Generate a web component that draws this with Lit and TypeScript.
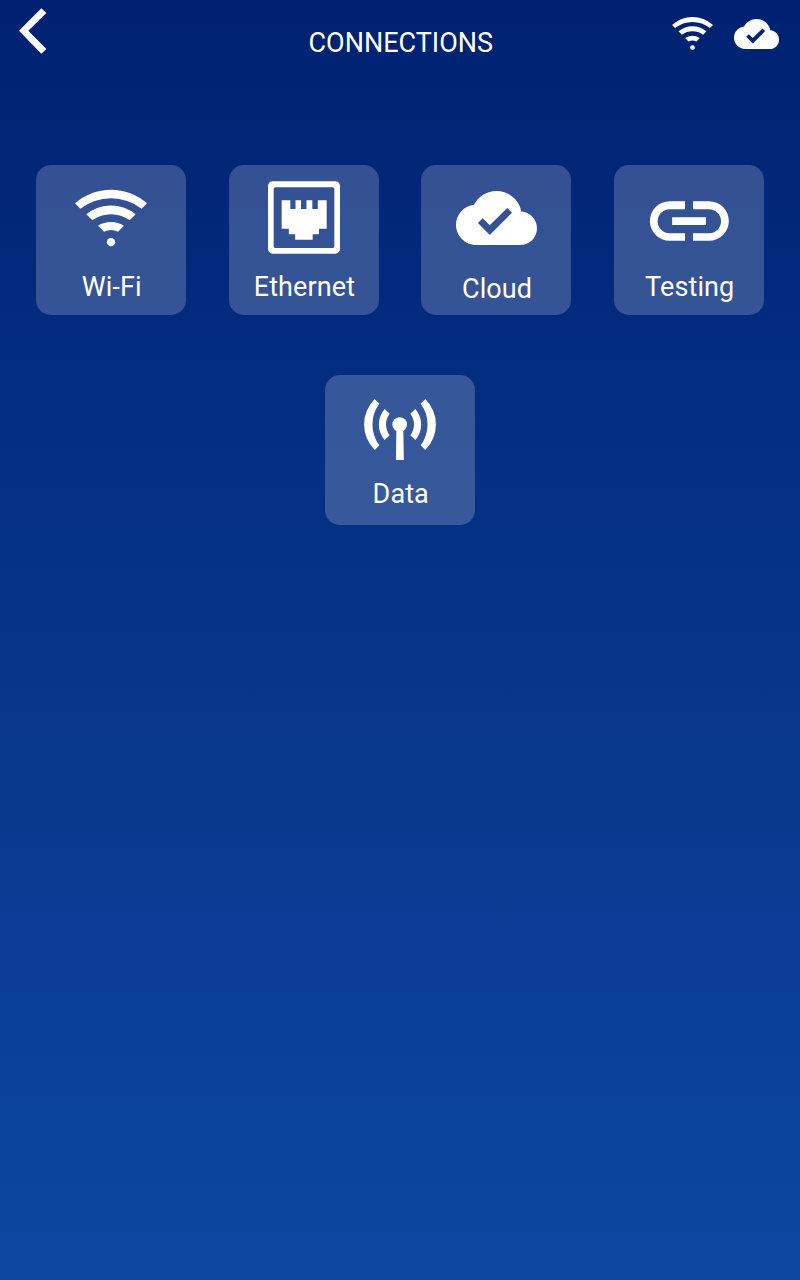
import { LitElement, html, css, svg } from "lit";
import { customElement, property } from "lit/decorators.js";

const wifi = svg`
  <path d="M135 130A163 163 0 0 1 351 130L335 146A152 152 0 0 0 151 146Z"/>
  <path d="M169 163A115.5 115.5 0 0 1 317 163L299 181A96 96 0 0 0 187 181Z"/>
  <path d="M204 197A74.6 74.6 0 0 1 282 197L264 215A47 47 0 0 0 222 215Z"/>
  <circle cx="243" cy="246.5" r="12.5"/>`;

const cloud = svg`
  <path d="M19.35 10.04C18.67 6.59 15.64 4 12 4 9.11 4 6.6 5.64 5.35 8.04 2.34 8.36 0 10.91 0 14c0 3.31 2.69 6 6 6h13c2.76 0 5-2.24 5-5 0-2.64-2.05-4.78-4.65-4.96zM10 17l-3.5-3.5 1.41-1.41L10 14.17 15.18 9l1.41 1.41L10 17z"/>`;

const ethernet = svg`
  <path fill-rule="evenodd" d="M146 63.5H334A14 14 0 0 1 348 77V267A14 14 0 0 1 334 281H146A14 14 0 0 1 132 267V77A14 14 0 0 1 146 63.5ZM154 81.5A5 5 0 0 0 149 86V259A5 5 0 0 0 154 264H326A5 5 0 0 0 331 259V86A5 5 0 0 0 326 81.5Z"/>
  <path d="M173 121H199V147H214.500V121H231V147H247.500V121H265V147H281.500V121H308V206H285V223H266V239.500H213.500V223H194.500V206H173Z"/>`;

const link = svg`
  <path d="M228 123.500H182A59.500 59.500 0 0 0 182 242.500H228V219.500H182A36 36 0 0 1 182 147.500H228ZM252 123.500H300A59.500 59.500 0 0 1 300 242.500H252V219.500H300A36 36 0 0 0 300 147.500H252ZM189.500 171.500H291V195H189.500Z"/>`;

const wave = svg`
  <path d="M164 87A108 108 0 0 0 164 240L178 226A105 105 0 0 1 178 101Z"/>
  <path d="M194 117A71 71 0 0 0 194 210L209 196A53.500 53.500 0 0 1 209 131Z"/>`;

const antenna = svg`
  ${wave}<g transform="matrix(-1 0 0 1 480 0)">${wave}</g>
  <circle cx="239" cy="163.500" r="22"/>
  <path d="M229 180H250L251.500 270H228Z"/>`;

@customElement("menu-tile")
class MenuTile extends LitElement {
  @property() label = "";
  static styles = css`
    :host {
      box-sizing: border-box;
      width: 150px;
      height: 150px;
      border-radius: 15px;
      background: rgba(255, 255, 255, 0.2);
      display: flex;
      flex-direction: column;
      align-items: center;
      justify-content: space-between;
    }
    .label {
      padding-left: 1.5px;
      line-height: 34px;
      white-space: nowrap;
    }
  `;
  render() {
    return html`<slot></slot><span class="label">${this.label}</span>`;
  }
}

@customElement("app-root")
class AppRoot extends LitElement {
  static styles = css`
    :host {
      display: block;
      box-sizing: border-box;
      min-height: 1280px;
      background: linear-gradient(#002171, #0d47a1);
      color: #fff;
      font: 27px Roboto, sans-serif;
    }
    svg {
      display: block;
      fill: #fff;
    }
    header {
      display: grid;
      grid-template-columns: 1fr auto 1fr;
      align-items: start;
      height: 165px;
    }
    .back {
      margin: 8px 0 0 19px;
    }
    h1 {
      margin: 26px 0 0;
      padding-left: 1.5px;
      font-size: 27px;
      font-weight: 400;
      line-height: 34px;
    }
    .status {
      display: flex;
      justify-content: flex-end;
      gap: 21px;
      padding: 17px 21px 0 0;
    }
    .status .cloud {
      margin-top: 2px;
    }
    .row {
      display: flex;
      justify-content: space-between;
      padding: 0 36px 60px;
      letter-spacing: 0.1px;
    }
    .centered {
      justify-content: center;
    }
    menu-tile {
      padding-bottom: 11px;
    }
    .low {
      padding-bottom: 9px;
    }
    .high {
      padding-bottom: 14px;
    }
  `;

  render() {
    return html`
      <header>
        <svg class="back" width="28" height="46" viewBox="57 24 84 138">
          <path d="M124 25L139 39L85 92.500L139 147L124 161L57 92.500Z" />
        </svg>
        <h1>CONNECTIONS</h1>
        <div class="status">
          <svg width="41" height="33" viewBox="135 89 216 170" preserveAspectRatio="none">${wifi}</svg>
          <svg class="cloud" width="45" height="30" viewBox="0 4 24 16">${cloud}</svg>
        </div>
      </header>
      <div class="row">
        <menu-tile label="Wi-Fi"><svg width="150" height="100" viewBox="18 15 450 300">${wifi}</svg></menu-tile>
        <menu-tile label="Ethernet"><svg width="150" height="100" viewBox="15 15 450 300">${ethernet}</svg></menu-tile>
        <menu-tile class="low" label="Cloud">
          <svg width="150" height="100" viewBox="15 15 450 300"><g transform="translate(120 52.5) scale(10.125)">${cloud}</g></svg>
        </menu-tile>
        <menu-tile label="Testing"><svg width="150" height="100" viewBox="15 15 450 300">${link}</svg></menu-tile>
      </div>
      <div class="row centered">
        <menu-tile class="high" label="Data"><svg width="150" height="100" viewBox="15 15 450 300">${antenna}</svg></menu-tile>
      </div>
    `;
  }
}
